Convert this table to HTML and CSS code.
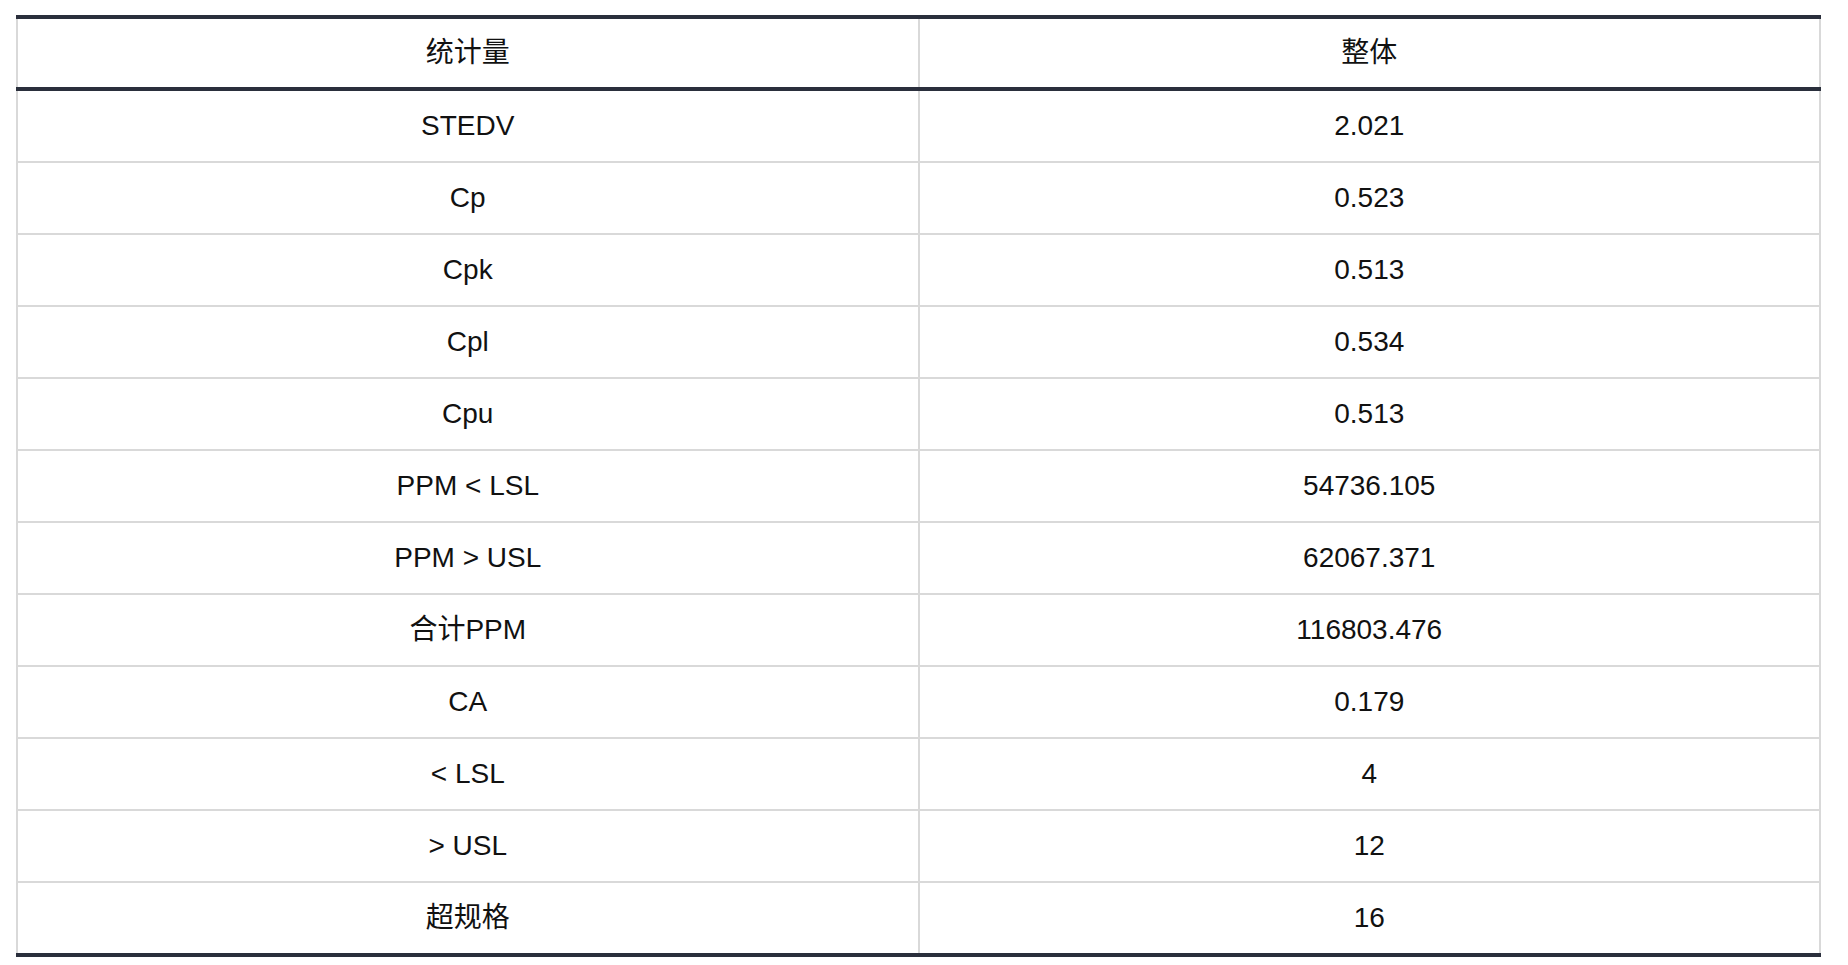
FILE: index.html
```html
<!DOCTYPE html>
<html lang="zh">
<head>
<meta charset="utf-8">
<title>统计量</title>
<link rel="stylesheet" href="styles.css">
</head>
<body>
<div class="wrap">
<table class="stats">
<thead>
<tr><th>统计量</th><th>整体</th></tr>
</thead>
<tbody>
<tr><td>STEDV</td><td>2.021</td></tr>
<tr><td>Cp</td><td>0.523</td></tr>
<tr><td>Cpk</td><td>0.513</td></tr>
<tr><td>Cpl</td><td>0.534</td></tr>
<tr><td>Cpu</td><td>0.513</td></tr>
<tr><td>PPM &lt; LSL</td><td>54736.105</td></tr>
<tr><td>PPM &gt; USL</td><td>62067.371</td></tr>
<tr><td>合计PPM</td><td>116803.476</td></tr>
<tr><td>CA</td><td>0.179</td></tr>
<tr><td>&lt; LSL</td><td>4</td></tr>
<tr><td>&gt; USL</td><td>12</td></tr>
<tr><td>超规格</td><td>16</td></tr>
</tbody>
</table>
</div>
</body>
</html>
```
FILE: styles.css
```css
html, body {
  margin: 0;
  padding: 0;
  background: #ffffff;
}
.wrap {
  padding: 15px 27px 0 16px;
}
.stats {
  width: 1805px;
  border-collapse: collapse;
  table-layout: fixed;
  font-family: "Liberation Sans", "Noto Sans CJK SC", Arial, sans-serif;
  font-size: 28px;
  line-height: 1;
  color: #111111;
  border-bottom: 4px solid #2a2f3c;
}
.stats th,
.stats td {
  height: 70px;
  padding: 0;
  text-align: center;
  vertical-align: middle;
  border: 2px solid #d9d9d9;
  font-weight: normal;
}
.stats thead th {
  height: 68px;
  border-top: 4px solid #2a2f3c;
  border-bottom: 4px solid #2a2f3c;
}
```
